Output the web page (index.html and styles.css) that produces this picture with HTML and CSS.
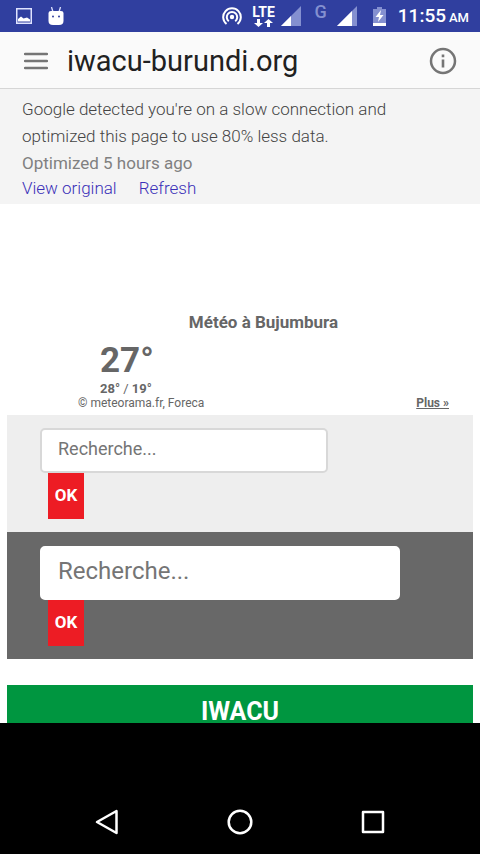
FILE: index.html
```html
<!DOCTYPE html>
<html lang="fr">
<head>
<meta charset="utf-8">
<meta name="viewport" content="width=device-width, initial-scale=1">
<title>iwacu-burundi.org</title>
<link rel="stylesheet" href="styles.css">
</head>
<body>
<div class="status">
  <div class="status-group status-left">
    <svg width="16" height="16" viewBox="0 0 16 16"><rect x=".75" y=".75" width="14.5" height="14.5" fill="none" stroke="#dfe3ff" stroke-width="1.5"/><path d="M2 13.500V11L5 8.500 7.500 10.500 11 9.500 14 11.500V13.500Z" fill="#fff"/></svg>
    <svg width="16" height="19" viewBox="0 0 16 19"><path d="M3.500 0 5 5M12.500 0 11 5" stroke="#dfe3ff" stroke-width="1.300"/><path d="M.5 6Q.5 4 3 4H13Q15.500 4 15.500 6V14Q15.500 18 11 18H5Q.5 18 .5 14Z" fill="#fff"/><circle cx="5" cy="9.500" r="1" fill="#303f9f"/><circle cx="11" cy="9.500" r="1" fill="#303f9f"/></svg>
  </div>
  <div class="status-group status-right">
    <svg width="20" height="20" viewBox="0 0 20 20" fill="none" stroke="#fff" stroke-width="2"><circle cx="10" cy="11" r="2.200" fill="#fff" stroke="none"/><path d="M6.800 15.300A5.200 5.200 0 1 1 13.200 15.300M4.500 18A8.800 8.800 0 1 1 15.500 18"/></svg>
    <div class="lte"><span>LTE</span><svg width="19" height="8" viewBox="0 0 19 8" fill="#fff"><path d="M3 0H6V4H9L4.500 8 0 4H3ZM13 8H16V4H19L14.500 0 10 4H13Z"/></svg></div>
    <svg width="20" height="20" viewBox="0 0 20 20"><path d="M20 0V20H0Z" fill="#8490d0"/><path d="M10 10V20H0Z" fill="#fff"/></svg>
    <span class="network">G</span>
    <svg width="20" height="20" viewBox="0 0 20 20"><path d="M20 0V20H0Z" fill="#8490d0"/><path d="M15 5V20H0Z" fill="#fff"/></svg>
    <svg class="battery" width="13" height="19" viewBox="0 0 13 19"><path d="M4 0H9V2H13V19H0V2H4Z" fill="#8490d0"/><path d="M0 16H13V19H0Z" fill="#fff"/><path d="M8 3 2.500 10H6L5 15 10.500 8H7Z" fill="#fff"/></svg>
    <time class="clock">11:55 <small>AM</small></time>
  </div>
</div>
<header class="bar">
  <button class="icon-button" aria-label="Menu"><svg width="24" height="18" viewBox="0 0 24 18" stroke="#757575" stroke-width="2.500" stroke-linecap="round"><path d="M1 2H23M1 9H23M1 16H23"/></svg></button>
  <h1>iwacu-burundi.org</h1>
  <button class="icon-button" aria-label="Info"><svg width="28" height="28" viewBox="0 0 28 28"><circle cx="14" cy="14" r="12" fill="none" stroke="#757575" stroke-width="2.500"/><path d="M14 12.500V20.500M14 7.500V10.200" stroke="#757575" stroke-width="2.600"/></svg></button>
</header>
<section class="notice" lang="en">
  <p>Google detected you're on a slow connection and optimized this page to use 80% less data.</p>
  <p class="age">Optimized 5 hours ago</p>
  <nav class="links"><a href="#">View original</a><a href="#">Refresh</a></nav>
</section>
<main class="page">
  <section class="weather">
    <h2>Météo à Bujumbura</h2>
    <div class="reading">
      <strong class="now">27°</strong>
      <div class="range"><b>28°</b> / <b>19°</b></div>
    </div>
    <div class="credit"><span>© meteorama.fr, Foreca</span><a href="#">Plus »</a></div>
  </section>
  <form class="search">
    <input type="text" placeholder="Recherche..." aria-label="Recherche">
    <button type="button">OK</button>
  </form>
  <form class="search search-dark">
    <input type="text" placeholder="Recherche..." aria-label="Recherche">
    <button type="button">OK</button>
  </form>
  <h2 class="title">IWACU</h2>
</main>
<footer class="system">
  <button aria-label="Back"><svg width="24" height="26" viewBox="0 0 24 26" fill="none" stroke="#fff" stroke-width="2.500" stroke-linejoin="round"><path d="M21.500 2V24L2 13Z"/></svg></button>
  <button aria-label="Home"><svg width="26" height="26" viewBox="0 0 26 26" fill="none" stroke="#fff" stroke-width="2.500"><circle cx="13" cy="13" r="11.300"/></svg></button>
  <button aria-label="Overview"><svg width="24" height="24" viewBox="0 0 24 24" fill="none" stroke="#fff" stroke-width="2.500" stroke-linejoin="round"><rect x="2" y="2" width="20" height="20"/></svg></button>
</footer>
</body>
</html>
```
FILE: styles.css
```css
* { box-sizing: border-box; }
body {
  margin: 0;
  height: 100vh;
  display: flex;
  flex-direction: column;
  font-family: Roboto, sans-serif;
  color: #666;
  background: #fff;
}
h1, h2, p { margin: 0; }
button { border: 0; padding: 0; background: none; font-family: inherit; }
svg { display: block; flex: none; }

.status {
  flex: none;
  height: 32px;
  padding: 0 11px 0 16px;
  display: flex;
  justify-content: space-between;
  background: #303f9f;
  color: #fff;
}
.status-group { display: flex; align-items: center; }
.status-left { gap: 16px; }
.status-right { gap: 10px; }
.lte { width: 24px; display: flex; flex-direction: column; align-items: center; font-size: 14px; line-height: 13px; font-weight: 700; margin-right: -5px; }
.network { align-self: flex-start; padding: 0 0 0 4px; font-size: 18px; line-height: 24px; font-weight: 500; color: #8490d0; }
.battery { margin: 0 2px 0 6px; }
.clock { display: flex; align-items: baseline; gap: 3px; font-size: 19px; line-height: 32px; padding-top: 2px; font-weight: 500; white-space: nowrap; }
.clock small { font-size: 13px; }

.bar {
  flex: none;
  height: 57px;
  padding: 2px 23px 0 24px;
  display: flex;
  align-items: center;
  background: #fafafa;
  border-bottom: 1px solid #d6d6d6;
}
.bar h1 { flex: 1; padding-left: 19px; font-size: 29px; line-height: 36px; font-weight: 400; color: #212121; }

.notice {
  flex: none;
  padding: 7px 66px 4px 22px;
  background: #f4f4f4;
  font-size: 17px;
  line-height: 27px;
  font-weight: 300;
  color: #444;
}
.notice .age { line-height: 26px; font-weight: 400; color: #808080; }
.links { display: flex; gap: 22px; line-height: 24px; }
.links a { color: #3a30b8; text-decoration: none; }

.page { flex: 1; min-height: 0; overflow: hidden; padding: 108px 7px 0; }
.weather { padding: 0 24px 5px 71px; }
.weather h2 { font-size: 17px; line-height: 20px; font-weight: 700; text-align: center; }
.reading { display: flex; flex-direction: column; padding: 8px 0 0 22px; }
.now { font-size: 35px; line-height: 41px; font-weight: 700; }
.range { font-size: 13px; line-height: 15px; }
.credit { display: flex; justify-content: space-between; font-size: 12px; line-height: 14px; }
.credit a { color: inherit; font-weight: 700; }

.search { padding: 13px 33px; background: #eee; }
.search input {
  display: block;
  width: 72%;
  height: 45px;
  padding: 0 16px 4px;
  border: 2px solid #d8d8d8;
  border-radius: 5px;
  background: #fff;
  font: 400 18px/24px Roboto, sans-serif;
  color: #666;
}
.search input::placeholder { color: #757575; opacity: 1; }
.search button {
  display: block;
  width: 36px;
  height: 46px;
  margin-left: 8px;
  padding-bottom: 3px;
  background: #ed1c24;
  color: #fff;
  font-size: 17px;
  font-weight: 700;
}
.search-dark { padding-top: 14px; background: #686868; }
.search-dark input { width: 90%; height: 54px; border-color: #fff; font-size: 24px; line-height: 32px; }
.title { margin-top: 26px; background: #009640; color: #fff; font-size: 25px; line-height: 54px; font-weight: 700; text-align: center; }

.system {
  flex: none;
  height: 131px;
  padding: 67px 40px 0;
  display: flex;
  justify-content: space-around;
  align-items: center;
  background: #000;
}
.system button { flex: 1; display: flex; justify-content: center; }
```
